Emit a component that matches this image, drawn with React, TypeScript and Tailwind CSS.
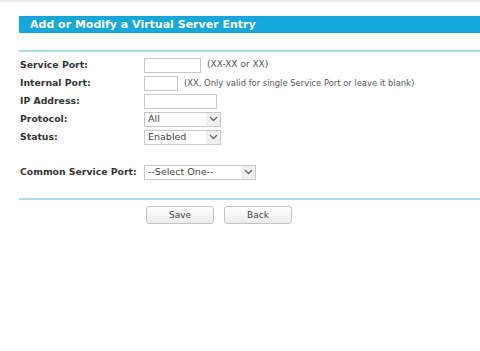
import React from "react";

const font = { fontFamily: '"DejaVu Sans", Verdana, sans-serif' };

function Chevron() {
  return (
    <svg width="9" height="6" viewBox="0 0 9 6" className="block">
      <path d="M1 1 L4.5 4.5 L8 1" fill="none" stroke="#666" strokeWidth="1.3" />
    </svg>
  );
}

function Select({ w, text }: { w: string; text: string }) {
  return (
    <div className={`${w} h-[15px] border border-[#c8c8c8] bg-white flex items-center`}>
      <span className="flex-1 pl-[3px] text-[9.5px] text-[#444] leading-none whitespace-nowrap">{text}</span>
      <div className="w-[14px] h-full bg-[#efefef] flex items-center justify-center">
        <Chevron />
      </div>
    </div>
  );
}

function Row({ label, children }: { label: string; children?: React.ReactNode }) {
  return (
    <div className="flex h-[18px] items-center">
      <div className="w-[125px] pl-[1px] text-[9.3px] font-bold text-[#333] whitespace-nowrap">{label}</div>
      <div className="flex items-center">{children}</div>
    </div>
  );
}

export default function App() {
  return (
    <div className="w-[480px] h-[351px] bg-white overflow-hidden" style={font}>
      <div className="h-[2px] bg-[#ececec]" />
      <div className="pl-[19px]">
        <div className="mt-[14px] h-[17px] bg-[#14a8dd] border-y border-[#1fa0d3] flex items-center pl-[11px]">
          <span className="text-[11px] font-bold text-white leading-none">Add or Modify a Virtual Server Entry</span>
        </div>
        <div className="mt-[17px] h-[2px] bg-[#a9dcef]" />
        <div className="mt-[4px]">
          <Row label="Service Port:">
            <div className="w-[57px] h-[15px] border border-[#c8c8c8]" />
            <span className="ml-[6px] text-[9px] text-[#555] whitespace-nowrap">(XX-XX or XX)</span>
          </Row>
          <Row label="Internal Port:">
            <div className="w-[34px] h-[15px] border border-[#c8c8c8]" />
            <span className="ml-[6px] text-[8.4px] text-[#555] whitespace-nowrap">
              (XX, Only valid for single Service Port or leave it blank)
            </span>
          </Row>
          <Row label="IP Address:">
            <div className="w-[73px] h-[15px] border border-[#c8c8c8]" />
          </Row>
          <Row label="Protocol:">
            <Select w="w-[77px]" text="All" />
          </Row>
          <Row label="Status:">
            <Select w="w-[77px]" text="Enabled" />
          </Row>
          <div className="h-[17px]" />
          <Row label="Common Service Port:">
            <Select w="w-[112px]" text="--Select One--" />
          </Row>
        </div>
        <div className="mt-[17px] h-[2px] bg-[#a9dcef]" />
        <div className="mt-[6px] flex gap-[10px] pl-[127px]">
          <button className="w-[68px] h-[18px] rounded-[3px] border border-[#c4c4c4] bg-gradient-to-b from-white to-[#ececec] text-[9px] text-[#444] leading-none">
            Save
          </button>
          <button className="w-[68px] h-[18px] rounded-[3px] border border-[#c4c4c4] bg-gradient-to-b from-white to-[#ececec] text-[9px] text-[#444] leading-none">
            Back
          </button>
        </div>
      </div>
    </div>
  );
}
